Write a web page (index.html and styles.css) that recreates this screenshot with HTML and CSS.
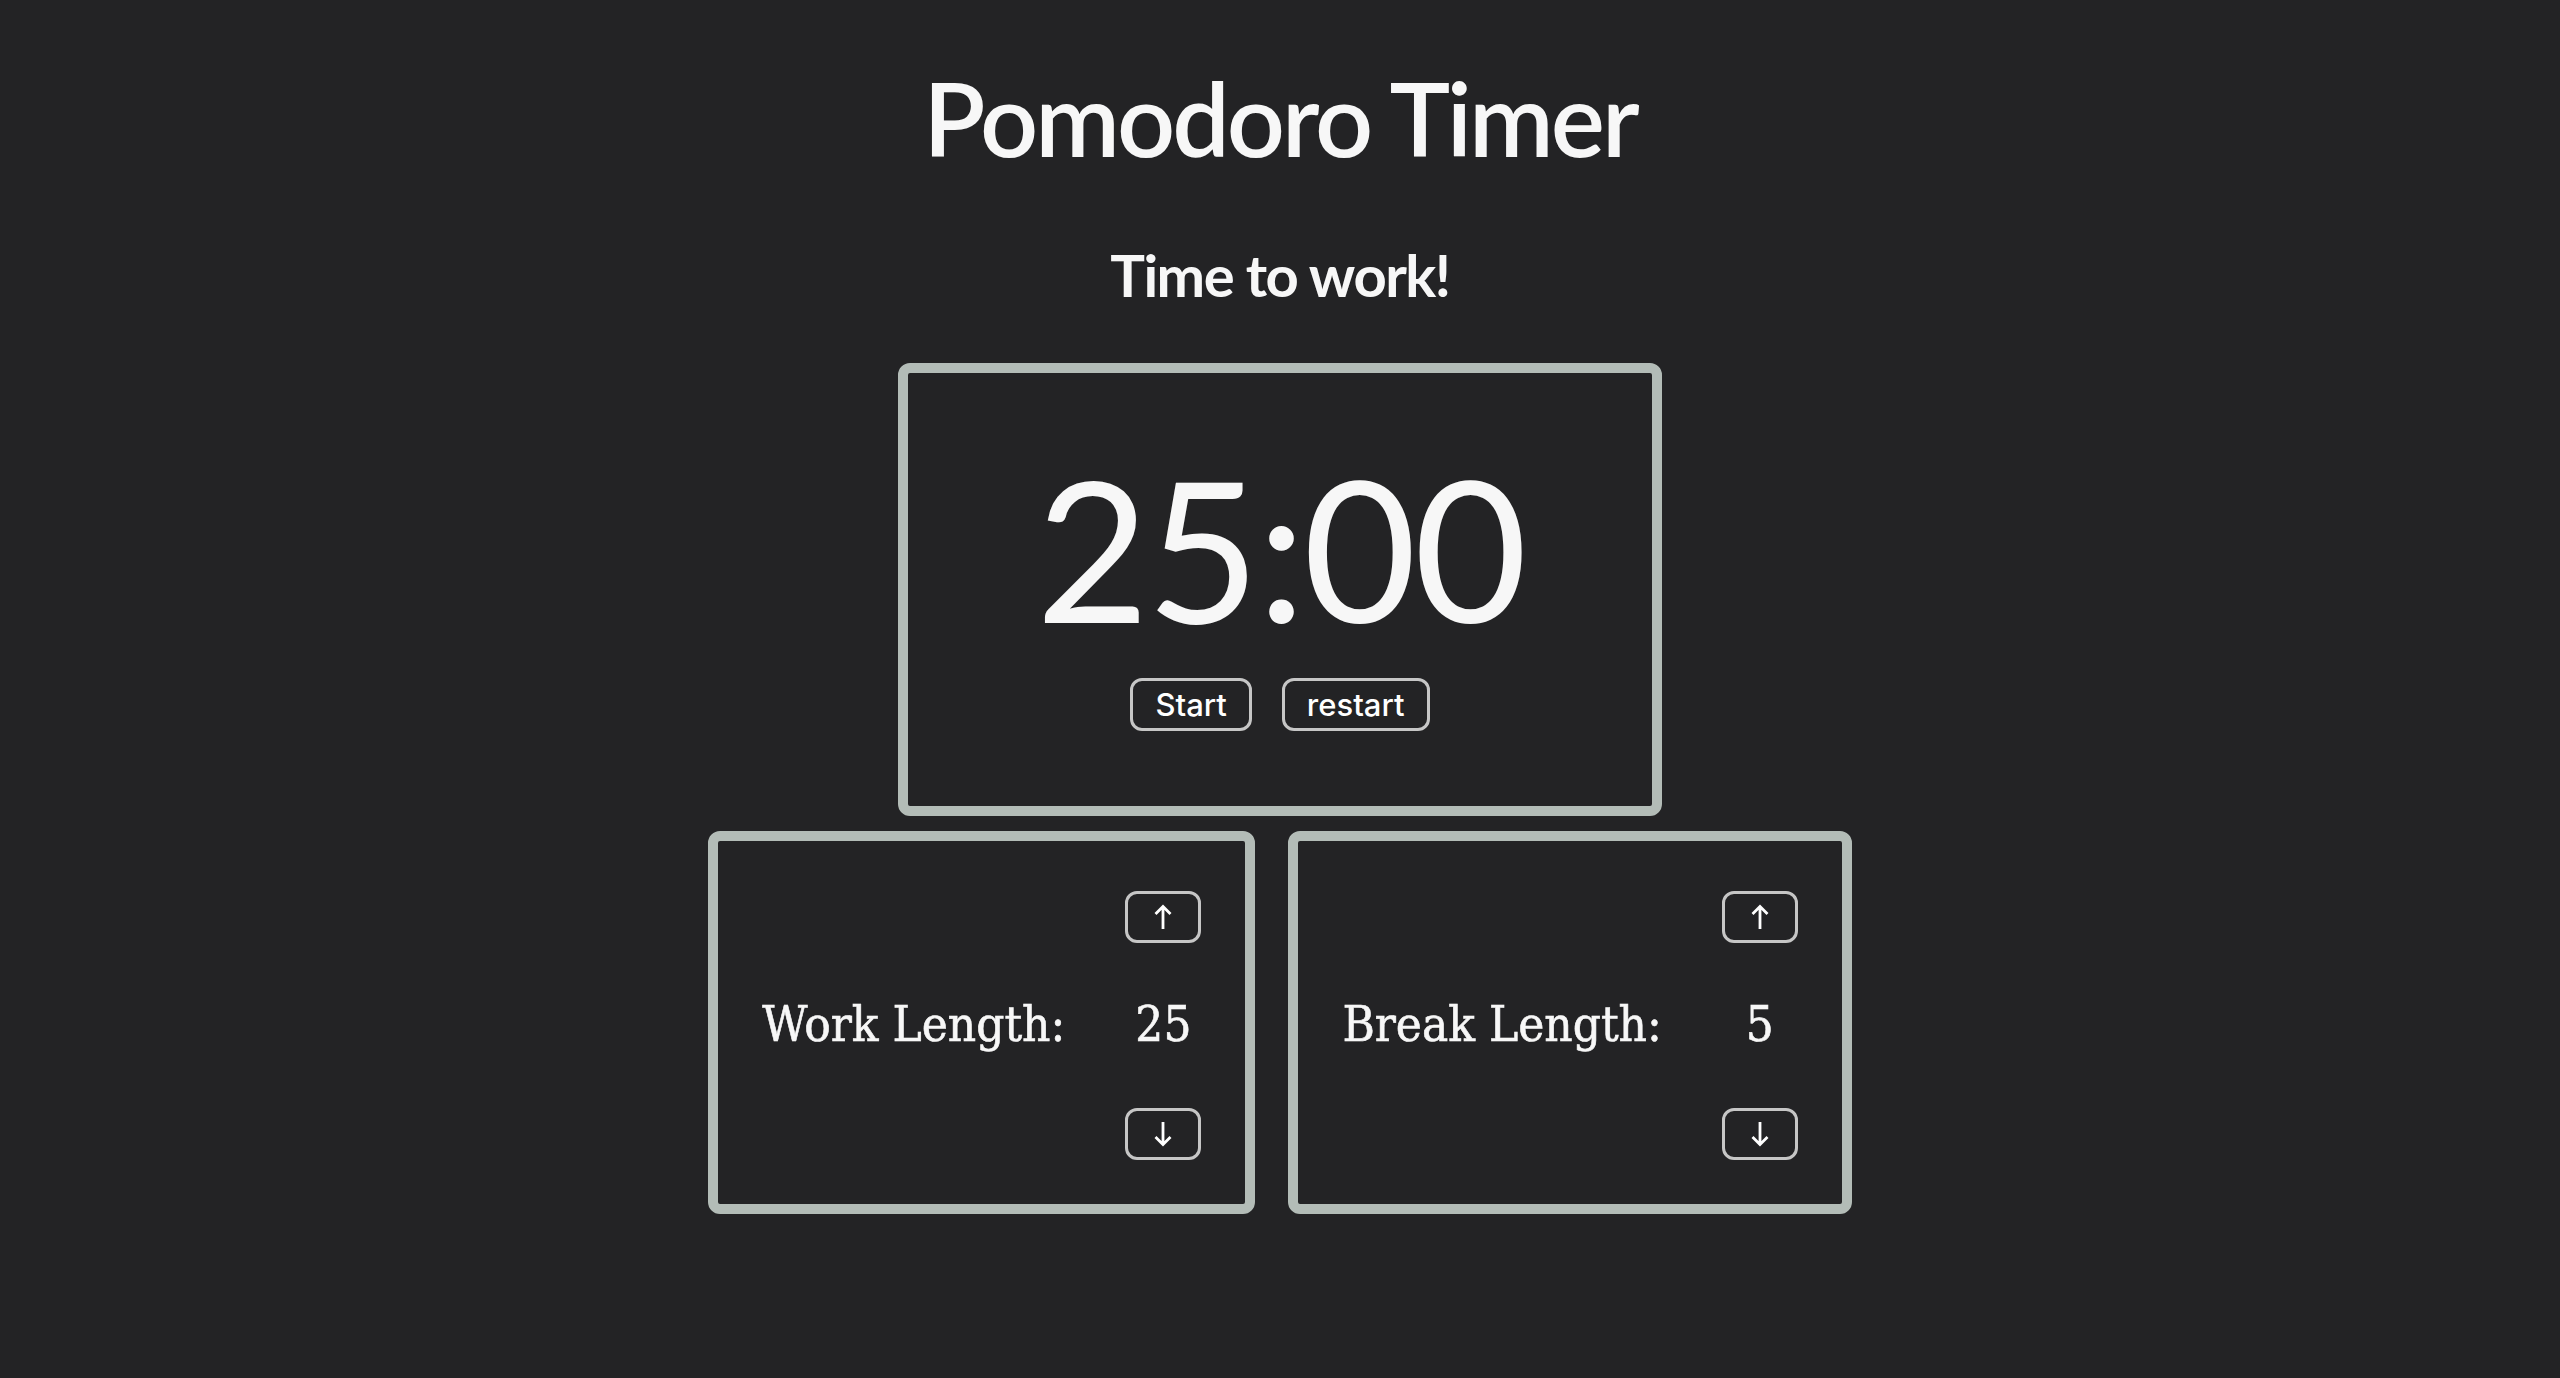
FILE: index.html
```html
<!DOCTYPE html>
<html lang="en">
<head>
<meta charset="utf-8">
<title>Pomodoro Timer</title>
<link rel="stylesheet" href="styles.css">
</head>
<body>
<main class="app">
  <h1 class="title">Pomodoro Timer</h1>
  <h2 class="status">Time to work!</h2>
  <section class="timer">
    <div class="time">25:00</div>
    <div class="controls">
      <button class="btn">Start</button>
      <button class="btn">restart</button>
    </div>
  </section>
  <section class="settings">
    <div class="setting">
      <span class="label">Work Length:</span>
      <div class="adjust">
        <button class="arrow" aria-label="increase">
          <svg viewBox="0 0 20 26" width="20" height="26"><path d="M10 25V2.5M2.5 10L10 2.5L17.5 10" fill="none" stroke="#fff" stroke-width="2.8"/></svg>
        </button>
        <span class="value">25</span>
        <button class="arrow" aria-label="decrease">
          <svg viewBox="0 0 20 26" width="20" height="26"><path d="M10 1V23.5M2.5 16L10 23.5L17.5 16" fill="none" stroke="#fff" stroke-width="2.8"/></svg>
        </button>
      </div>
    </div>
    <div class="setting">
      <span class="label">Break Length:</span>
      <div class="adjust">
        <button class="arrow" aria-label="increase">
          <svg viewBox="0 0 20 26" width="20" height="26"><path d="M10 25V2.5M2.5 10L10 2.5L17.5 10" fill="none" stroke="#fff" stroke-width="2.8"/></svg>
        </button>
        <span class="value">5</span>
        <button class="arrow" aria-label="decrease">
          <svg viewBox="0 0 20 26" width="20" height="26"><path d="M10 1V23.5M2.5 16L10 23.5L17.5 16" fill="none" stroke="#fff" stroke-width="2.8"/></svg>
        </button>
      </div>
    </div>
  </section>
</main>
</body>
</html>
```

FILE: styles.css
```css
html, body {
  margin: 0;
  padding: 0;
  background: #232325;
}

body {
  color: #f7f7f7;
  font-family: Lato, "Open Sans", sans-serif;
}

.app {
  display: flex;
  flex-direction: column;
  align-items: center;
  padding-top: 57px;
}

.title {
  margin: 0;
  font-size: 102px;
  font-weight: 600;
  line-height: 1.2;
  letter-spacing: -3px;
}

.status {
  margin: 61px 0 0;
  font-size: 58px;
  font-weight: 700;
  line-height: 1.2;
  letter-spacing: -1.5px;
}

.timer {
  box-sizing: border-box;
  width: 764px;
  margin-top: 53px;
  padding: 57px 0 75px;
  border: 10px solid #b3bcb7;
  border-radius: 12px;
  display: flex;
  flex-direction: column;
  align-items: center;
}

.time {
  font-size: 196px;
  font-weight: 400;
  line-height: 1.2;
  letter-spacing: -3px;
}

.controls {
  display: flex;
  gap: 30px;
  margin-top: 13px;
}

.btn {
  box-sizing: border-box;
  height: 53px;
  padding: 0 22px;
  background: transparent;
  color: #ffffff;
  border: 3px solid #c6c6c6;
  border-radius: 12px;
  font-family: Inter, "Noto Sans", sans-serif;
  font-size: 31px;
  font-weight: 500;
  line-height: 1;
}

.settings {
  display: flex;
  gap: 33px;
  margin-top: 15px;
}

.setting {
  display: flex;
  align-items: center;
  gap: 60px;
  padding: 50px 44px 44px 44px;
  border: 10px solid #b3bcb7;
  border-radius: 12px;
}

.label,
.value {
  font-family: "DejaVu Serif", "Liberation Serif", serif;
  font-stretch: condensed;
  font-size: 49px;
  line-height: 1.2;
  color: #f7f7f7;
  -webkit-text-stroke: 0.6px #f7f7f7;
}

.adjust {
  display: flex;
  flex-direction: column;
  align-items: center;
  gap: 53px;
}

.arrow {
  box-sizing: border-box;
  width: 76px;
  height: 52px;
  padding: 0;
  background: transparent;
  border: 3px solid #c6c6c6;
  border-radius: 12px;
  display: flex;
  align-items: center;
  justify-content: center;
}

.arrow svg {
  display: block;
}
```
